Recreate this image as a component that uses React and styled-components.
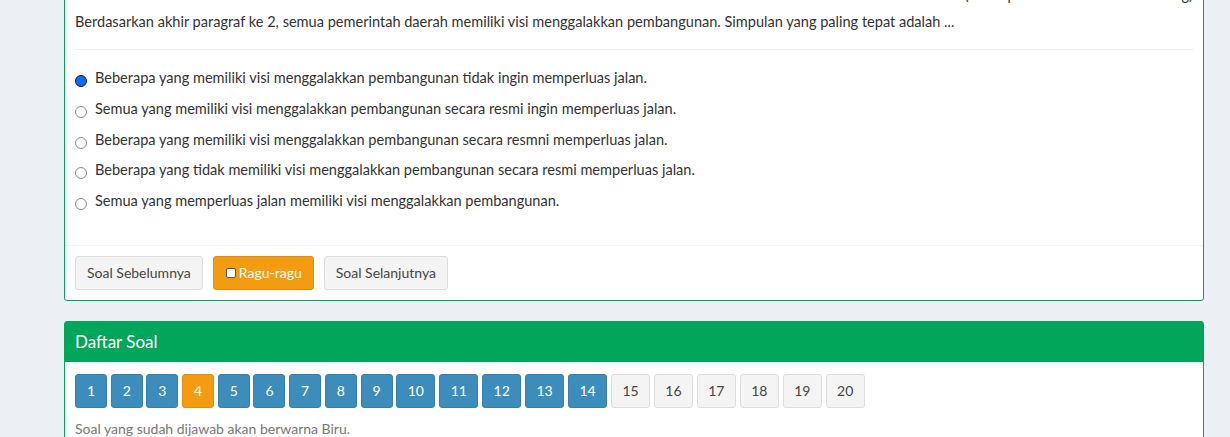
import React, { useState } from 'react';
import styled, { createGlobalStyle } from 'styled-components';

const GlobalStyle = createGlobalStyle`
  html, body {
    margin: 0;
    padding: 0;
    background: #ecf0f5;
  }
  body {
    font-family: Lato, 'Liberation Sans', sans-serif;
    font-size: 14px;
    line-height: 20px;
    color: #333;
    overflow: hidden;
  }
  * {
    box-sizing: border-box;
  }
`;

// Layout
const Content = styled.div`
  margin-top: -26px;
  padding-left: 64px;
  width: 1204px;
`;

const Box = styled.div`
  background: #fff;
  border: 1px solid #00a65a;
  border-radius: 3px;
  margin-bottom: 20px;
`;

const BoxHeader = styled.div`
  background: #00a65a;
  color: #fff;
  padding: 10px 10px;
  height: 40px;
`;

const BoxTitle = styled.h3`
  margin: 0;
  font-size: 17px;
  font-weight: normal;
  line-height: 20px;
`;

const BoxBody = styled.div`
  padding: ${(p) => p.$pad || '10px'};
`;

const BoxFooter = styled.div`
  border-top: 1px solid #f4f4f4;
  padding: 10px;
  display: flex;
  gap: 10px;
`;

// Question
const SourceLine = styled.p`
  margin: 0 0 7px;
  text-align: right;
  font-size: 14.55px;
`;

const Question = styled.p`
  margin: 0 0 17px;
  font-size: 14.55px;
`;

const Divider = styled.hr`
  margin: 0 0 18px;
  border: 0;
  border-top: 1px solid #eee;
`;

const Options = styled.div`
  display: flex;
  flex-direction: column;
  gap: 10.8px;
  padding-bottom: 24px;
`;

const OptionLabel = styled.label`
  display: flex;
  align-items: flex-start;
  gap: 8px;
  height: 20px;
  cursor: pointer;
  font-size: 14.55px;
  line-height: 20px;
`;

const Radio = styled.input.attrs({ type: 'radio' })`
  appearance: none;
  margin: 7px 0 0;
  width: 12px;
  height: 12px;
  flex: 0 0 12px;
  border-radius: 50%;
  border: 1px solid #8a8a8a;
  background: #fff;
  &:checked {
    background: #0a6dfa;
    border: 1.5px solid #1a1a2e;
  }
`;

// Buttons
const Button = styled.button`
  display: inline-flex;
  align-items: center;
  height: 34px;
  padding: 6px 11px;
  font-family: inherit;
  font-size: 14px;
  line-height: 20px;
  border-radius: 3px;
  border: 1px solid ${(p) => (p.$variant === 'warning' ? '#e08e0b' : '#ddd')};
  background: ${(p) => (p.$variant === 'warning' ? '#f39c12' : '#f4f4f4')};
  color: ${(p) => (p.$variant === 'warning' ? '#fff' : '#444')};
  cursor: pointer;
`;

const Check = styled.input.attrs({ type: 'checkbox' })`
  appearance: none;
  width: 10px;
  height: 10px;
  margin: 0 3px 0 1px;
  border: 1px solid #555;
  border-radius: 2px;
  background: #fff;
`;

const NumberGrid = styled.div`
  display: flex;
  flex-wrap: wrap;
  gap: 3.7px;
`;

const NumButton = styled.button`
  height: 34px;
  min-width: 32px;
  padding: 6px 10.5px;
  font-family: inherit;
  font-size: 14px;
  line-height: 20px;
  border-radius: 3px;
  cursor: pointer;
  border: 1px solid
    ${(p) => (p.$state === 'done' ? '#367fa9' : p.$state === 'doubt' ? '#e08e0b' : '#ddd')};
  background: ${(p) =>
    p.$state === 'done' ? '#3c8dbc' : p.$state === 'doubt' ? '#f39c12' : '#f4f4f4'};
  color: ${(p) => (p.$state === 'todo' ? '#444' : '#fff')};
`;

const Note = styled.p`
  margin: 11px 0 0;
  color: #777;
`;

const options = [
  'Beberapa yang memiliki visi menggalakkan pembangunan tidak ingin memperluas jalan.',
  'Semua yang memiliki visi menggalakkan pembangunan secara resmi ingin memperluas jalan.',
  'Beberapa yang memiliki visi menggalakkan pembangunan secara resmni memperluas jalan.',
  'Beberapa yang tidak memiliki visi menggalakkan pembangunan secara resmi memperluas jalan.',
  'Semua yang memperluas jalan memiliki visi menggalakkan pembangunan.',
];

const numbers = Array.from({ length: 20 }, (_, i) => i + 1);

const stateOf = (n) => (n === 4 ? 'doubt' : n <= 14 ? 'done' : 'todo');

const App = () => {
  const [answer, setAnswer] = useState(0);

  return (
    <>
      <GlobalStyle />
      <Content>
        <Box>
          <BoxBody>
            <SourceLine>(Dikutip dari berita daerah Bontang)</SourceLine>
            <Question>
              Berdasarkan akhir paragraf ke 2, semua pemerintah daerah memiliki visi menggalakkan
              pembangunan. Simpulan yang paling tepat adalah ...
            </Question>
            <Divider />
            <Options>
              {options.map((opt, i) => (
                <OptionLabel key={i}>
                  <Radio name="jawaban" checked={answer === i} onChange={() => setAnswer(i)} />
                  {opt}
                </OptionLabel>
              ))}
            </Options>
          </BoxBody>
          <BoxFooter>
            <Button>Soal Sebelumnya</Button>
            <Button $variant="warning">
              <Check readOnly />
              Ragu-ragu
            </Button>
            <Button>Soal Selanjutnya</Button>
          </BoxFooter>
        </Box>

        <Box>
          <BoxHeader>
            <BoxTitle>Daftar Soal</BoxTitle>
          </BoxHeader>
          <BoxBody $pad="12px 10px 10px">
            <NumberGrid>
              {numbers.map((n) => (
                <NumButton key={n} $state={stateOf(n)}>
                  {n}
                </NumButton>
              ))}
            </NumberGrid>
            <Note>Soal yang sudah dijawab akan berwarna Biru.</Note>
          </BoxBody>
        </Box>
      </Content>
    </>
  );
};

export default App;
